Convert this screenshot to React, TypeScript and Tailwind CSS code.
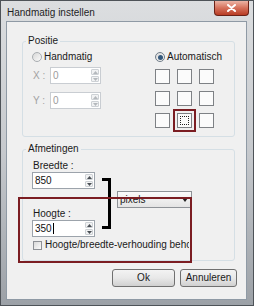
import React from "react";

function Arrow({ up, disabled }: { up?: boolean; disabled?: boolean }) {
  return (
    <svg width="5" height="3" viewBox="0 0 5 3">
      <path d={up ? "M0 3 L2.5 0 L5 3 Z" : "M0 0 L5 0 L2.5 3 Z"} fill={disabled ? "#b4b8bc" : "#4a4f55"} />
    </svg>
  );
}

function Spin({ value, width, disabled, caret }: { value: string; width: string; disabled?: boolean; caret?: boolean }) {
  return (
    <div
      className={`flex h-[17px] ${width} border bg-white ${
        disabled ? "border-[#c9cdd2] text-[#9c9c9c]" : "border-[#9ca3ab] text-[#111]"
      }`}
    >
      <div className="flex flex-1 items-center pl-[2px]">
        <span>{value}</span>
        {caret && <span className="ml-px h-[11px] w-px bg-black" />}
      </div>
      <div className="flex w-[10px] flex-col gap-px p-px">
        <div className="flex flex-1 items-center justify-center rounded-[1px] border border-[#cdd1d5] bg-[#f1f2f3]">
          <Arrow up disabled={disabled} />
        </div>
        <div className="flex flex-1 items-center justify-center rounded-[1px] border border-[#cdd1d5] bg-[#f1f2f3]">
          <Arrow disabled={disabled} />
        </div>
      </div>
    </div>
  );
}

function Radio({ checked }: { checked?: boolean }) {
  return (
    <span
      className={`flex h-[10px] w-[10px] items-center justify-center rounded-full border bg-linear-to-br from-[#d8d8d8] to-[#fafafa] ${
        checked ? "border-[#6f7c88]" : "border-[#a9adb1]"
      }`}
    >
      {checked && <span className="h-[5px] w-[5px] rounded-full bg-[#34587c]" />}
    </span>
  );
}

export default function App() {
  const cells = [0, 1, 2, 3, 4, 5, 6, 7, 8];

  return (
    <div className="relative flex h-[306px] w-[254px] flex-col border border-[#4e5358] bg-linear-to-b from-[#dcdee0] via-[#c6c9cd] to-[#9ca1a7] font-['Liberation_Sans',Arial,sans-serif] text-[10px] leading-[12px] text-[#1a1a1a]">
      {/* title bar */}
      <div className="flex h-[20px] items-start justify-between">
        <span className="pl-[6px] pt-[6px] text-[#1e1e1e]">Handmatig instellen</span>
        <button className="mr-[4px] flex h-[15px] w-[35px] items-center justify-center rounded-b-[4px] border border-t-0 border-[#6b2217] bg-linear-to-b from-[#ebb4a5] via-[#d5705a] to-[#b83b23]">
          <svg width="9" height="8" viewBox="0 0 9 8">
            <path d="M1 1 L8 7 M8 1 L1 7" stroke="white" strokeWidth="2" strokeLinecap="round" />
          </svg>
        </button>
      </div>

      {/* client area */}
      <div className="mb-[5px] ml-[5px] mr-[6px] flex flex-1 flex-col border border-[#8f9aa5] bg-[#f0f0f0]">
        {/* Positie */}
        <fieldset className="ml-[15px] mr-[11px] mt-[13px] rounded-[3px] border border-[#d5dfe5]">
          <legend className="ml-[3px] px-[2px] leading-[12px]">Positie</legend>
          <div className="flex pb-[8px] pt-[4px]">
            <div className="flex w-[132px] flex-col pl-[9px]">
              <div className="flex h-[12px] items-center gap-[2px]">
                <Radio />
                <span>Handmatig</span>
              </div>
              <div className="mt-[4px] flex items-center">
                <span className="w-[18px] pl-[1px] text-[#a2a2a2]">X :</span>
                <Spin value="0" width="w-[51px]" disabled />
              </div>
              <div className="mt-[8px] flex items-center">
                <span className="w-[18px] pl-[1px] text-[#a2a2a2]">Y :</span>
                <Spin value="0" width="w-[51px]" disabled />
              </div>
            </div>
            <div className="flex flex-col">
              <div className="flex h-[12px] items-center gap-[2px]">
                <Radio checked />
                <span>Automatisch</span>
              </div>
              <div className="mt-[6px] grid w-fit grid-cols-3 gap-[7px]">
                {cells.map((i) => (
                  <div
                    key={i}
                    className={`flex h-[15px] w-[15px] items-center justify-center border border-[#7e8185] bg-[#fbfbfb] ${
                      i === 7 ? "outline-2 outline-offset-[2px] outline-solid outline-[#7b1d22]" : ""
                    }`}
                  >
                    {i === 7 && <div className="h-[9px] w-[9px] border border-dotted border-[#222]" />}
                  </div>
                ))}
              </div>
            </div>
          </div>
        </fieldset>

        {/* Afmetingen */}
        <fieldset className="ml-[15px] mr-[11px] mt-[6px] rounded-[3px] border border-[#d5dfe5]">
          <legend className="ml-[3px] px-[2px] leading-[12px]">Afmetingen</legend>
          <div className="flex flex-col pb-[9px] pl-[9px]">
            <div className="flex items-start">
              <div className="flex flex-col">
                <span className="mt-[5px] pl-[1px]">Breedte :</span>
                <Spin value="850" width="w-[63px]" />
                <span className="mt-[19px] pl-[1px]">Hoogte :</span>
                <Spin value="350" width="w-[63px]" caret />
              </div>
              <svg className="ml-[7px] mt-[23px]" width="9" height="51" viewBox="0 0 9 51">
                <path d="M0 1.5 H7.5 V49.5 H0" stroke="#000" strokeWidth="3" fill="none" />
              </svg>
              <div className="ml-[6px] mt-[36px] flex h-[17px] w-[75px] items-center justify-between border border-[#8e9297] bg-linear-to-b from-[#fbfbfb] to-[#e4e4e4] pl-[2px] pr-[3px]">
                <span>pixels</span>
                <svg width="6" height="4" viewBox="0 0 6 4">
                  <path d="M0 0 H6 L3 4 Z" fill="#222" />
                </svg>
              </div>
            </div>
            <div className="mt-[2px] flex h-[12px] w-[157px] items-center gap-[3px] overflow-hidden whitespace-nowrap pl-[1px]">
              <span className="h-[9px] w-[9px] shrink-0 border border-[#8e9196] bg-linear-to-br from-[#d9d9d9] to-[#fbfbfb]" />
              <span>Hoogte/breedte-verhouding behouden</span>
            </div>
          </div>
        </fieldset>

        {/* buttons */}
        <div className="mt-[8px] flex justify-end gap-[5px] pr-[9px]">
          <button className="h-[18px] w-[63px] rounded-[3px] border border-[#707070] bg-linear-to-b from-[#f3f3f3] via-[#e8e8e8] to-[#d0d0d0] text-[#1a1a1a]">
            Ok
          </button>
          <button className="h-[18px] w-[57px] rounded-[3px] border border-[#707070] bg-linear-to-b from-[#f3f3f3] via-[#e8e8e8] to-[#d0d0d0] text-[#1a1a1a]">
            Annuleren
          </button>
        </div>
      </div>

      {/* annotation highlight */}
      <div className="absolute left-[17px] top-[196px] h-[66px] w-[174px] border-2 border-[#7b1d22]" />
    </div>
  );
}
